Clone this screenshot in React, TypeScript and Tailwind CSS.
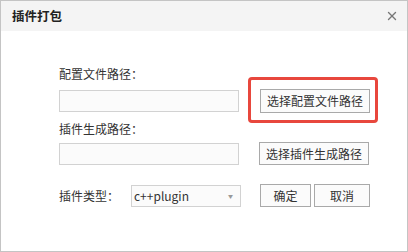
import { X } from "lucide-react";

const font = { fontFamily: '"Noto Sans CJK SC", "Noto Sans", sans-serif' };

function PathButton({ label, className = "" }: { label: string; className?: string }) {
  return (
    <button
      type="button"
      className={`flex items-center justify-center border border-[#a9a9a9] bg-[#fbfbfb] text-[12px] leading-none text-[#333] ${className}`}
    >
      {label}
    </button>
  );
}

export default function App() {
  return (
    <div
      className="flex h-[252px] w-[408px] flex-col border border-[#c4c4c4] bg-white text-[#333]"
      style={font}
    >
      <div className="flex h-[30px] shrink-0 items-center justify-between bg-[#f4f4f4] pl-[11px] pr-[8px]">
        <span className="text-[12.5px] font-bold text-[#222]">插件打包</span>
        <X size={14} strokeWidth={2.4} className="text-[#777]" />
      </div>

      <div className="flex flex-col pl-[58px] pt-[35px]">
        <p className="h-[16px] text-[12px] leading-[16px]">配置文件路径：</p>

        <div className="mt-[7px] flex h-[24px] items-center">
          <input className="h-[22px] w-[180px] border border-[#d2d2d2] bg-[#fbfbfb] outline-none" />
          <div className="relative ml-[21px]">
            <PathButton label="选择配置文件路径" className="h-[24px] w-[110px]" />
            <div className="pointer-events-none absolute -bottom-[10px] -left-[12px] -right-[8px] -top-[12px] rounded-[4px] border-[3px] border-[#e8473d]" />
          </div>
        </div>

        <p className="mt-[8px] h-[16px] text-[12px] leading-[16px]">插件生成路径：</p>

        <div className="mt-[5px] flex h-[23px] items-center">
          <input className="h-[22px] w-[180px] border border-[#d2d2d2] bg-[#fbfbfb] outline-none" />
          <PathButton label="选择插件生成路径" className="ml-[20px] h-[23px] w-[110px]" />
        </div>

        <div className="mt-[19px] flex h-[23px] items-center">
          <span className="w-[72px] text-[12px]">插件类型：</span>
          <div className="flex h-[22px] w-[110px] items-center justify-between border border-[#d2d2d2] bg-[#fbfbfb] pl-[2px] pr-[7px]">
            <span className="text-[12px]">c++plugin</span>
            <span className="text-[5px] text-[#999]">▼</span>
          </div>
          <PathButton label="确定" className="ml-[19px] h-[23px] w-[51px]" />
          <PathButton label="取消" className="ml-[3px] h-[23px] w-[56px]" />
        </div>
      </div>
    </div>
  );
}
